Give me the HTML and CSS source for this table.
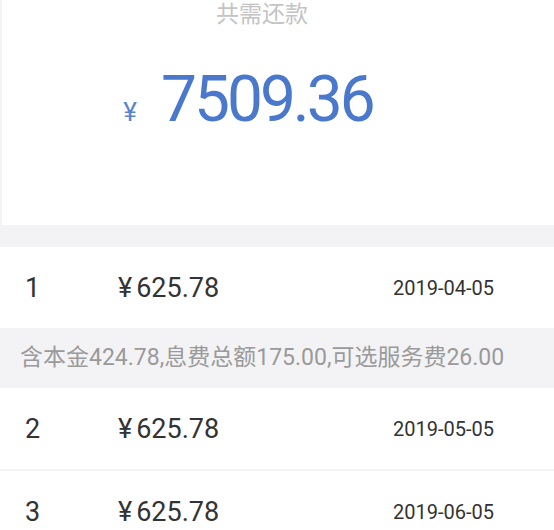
FILE: index.html
```html
<!DOCTYPE html>
<html lang="zh">
<head>
<meta charset="utf-8">
<link rel="stylesheet" href="styles.css">
</head>
<body>
<div class="summary">
  <div class="title">共需还款</div>
  <div class="amount"><span class="cur">¥</span><span class="num">7509.36</span></div>
</div>
<div class="row first">
  <span class="idx">1</span><span class="money"><span class="yen">¥</span>625.78</span><span class="date">2019-04-05</span>
</div>
<div class="note">含本金424.78,息费总额175.00,可选服务费26.00</div>
<div class="row">
  <span class="idx">2</span><span class="money"><span class="yen">¥</span>625.78</span><span class="date">2019-05-05</span>
</div>
<div class="row sep">
  <span class="idx">3</span><span class="money"><span class="yen">¥</span>625.78</span><span class="date">2019-06-05</span>
</div>
</body>
</html>
```
FILE: styles.css
```css
html, body {
  margin: 0;
  padding: 0;
}
body {
  background: #f3f3f5;
  font-family: Roboto, "Noto Sans CJK SC", sans-serif;
  color: #333;
  overflow: hidden;
}
.summary {
  height: 225px;
  background: #fff;
  margin-left: 2px;
  display: flex;
  flex-direction: column;
  align-items: center;
}
.title {
  font-size: 23px;
  line-height: 30px;
  color: #c4c4c4;
  padding-right: 32px;
}
.amount {
  margin-top: 32px;
  display: flex;
  align-items: baseline;
  padding-right: 60px;
  color: #4a78cc;
}
.cur {
  font-size: 26px;
  margin-right: 24px;
  color: #5b84cf;
}
.num {
  font-size: 64px;
  line-height: 76px;
  letter-spacing: -3px;
}
.row {
  height: 81px;
  background: #fff;
  display: flex;
  align-items: center;
  padding: 0 60px 0 25px;
}
.first {
  margin-top: 22px;
}
.row.sep {
  margin-top: 2px;
}
.idx {
  width: 93px;
  font-size: 27px;
}
.money {
  flex: 1;
  font-size: 27px;
}
.yen {
  margin-right: 4px;
}
.date {
  font-size: 20px;
}
.note {
  height: 60px;
  line-height: 60px;
  padding-left: 20px;
  font-size: 23px;
  color: #9a9a9a;
  white-space: nowrap;
}
```
